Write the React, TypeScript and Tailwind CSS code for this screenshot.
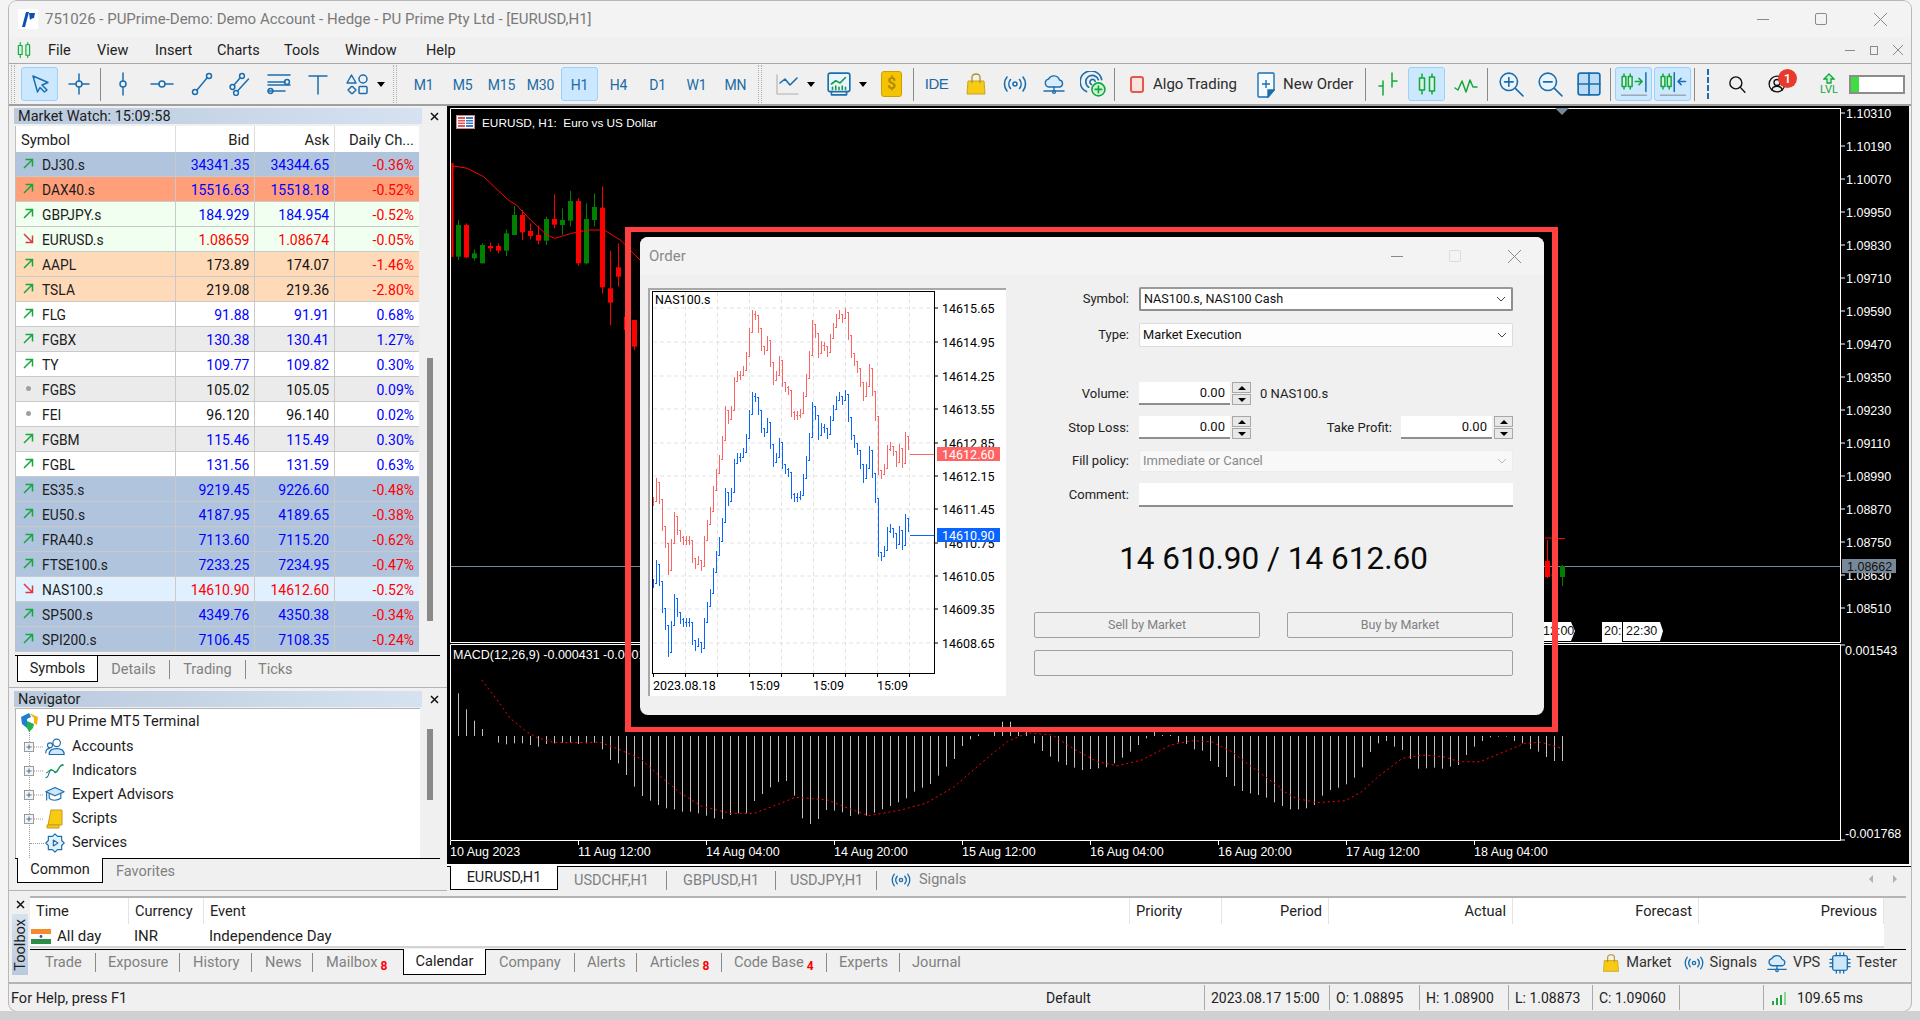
import React from "react"

const BLUE = "#1b6eae"
const GREEN = "#12a83c"

type P = { children: React.ReactNode; size?: number; color?: string; sw?: number }

function Ic({ children, size = 24, color = BLUE, sw = 1.5 }: P) {
  return (
    <svg width={size} height={size} viewBox="0 0 24 24" fill="none" stroke={color} strokeWidth={sw} strokeLinejoin="round" strokeLinecap="round">
      {children}
    </svg>
  )
}

function Slot({ children, on, w = "w-[39px]" }: { children: React.ReactNode; on?: boolean; w?: string }) {
  return (
    <div className={`${w} h-[40px] flex items-center justify-center shrink-0`}>
      <div className={`w-[37px] h-[34px] flex items-center justify-center rounded-[3px] border ${on ? "bg-[#cce8ff] border-[#99d1ff]" : "border-transparent"}`}>
        {children}
      </div>
    </div>
  )
}

const Sep = () => (
  <div className="w-[5px] h-[40px] flex items-center justify-center shrink-0">
    <div className="w-px h-[33px] bg-[#8a8a8a]" />
  </div>
)

const Handle = () => <div className="w-[4px] h-[38px] shrink-0 border-x border-dotted border-[#b0b0b0]" />

const Drop = () => (
  <div className="w-[10px] shrink-0 flex justify-center">
    <div className="w-0 h-0 border-x-[4.5px] border-x-transparent border-t-[5px] border-t-black" />
  </div>
)

function Tf({ t, on }: { t: string; on?: boolean }) {
  return (
    <Slot on={on}>
      <span className="text-[14px] text-[#1b6ba3] tracking-[-0.2px] pt-[2px]">{t}</span>
    </Slot>
  )
}

function Bag({ size = 24 }: { size?: number }) {
  return (
    <svg width={size} height={size} viewBox="0 0 24 24">
      <path d="M4 9h16l1 13H3z" fill="#f7cb14" stroke="#c9a227" strokeWidth="1" />
      <path d="M8 11V5a4 3 0 0 1 8 0v6" fill="none" stroke="#b38f1e" strokeWidth="1.3" />
    </svg>
  )
}

function Signal({ size = 24 }: { size?: number }) {
  return (
    <Ic size={size} sw={1.6}>
      <circle cx="12" cy="12" r="2" />
      <path d="M7.5 7.5a7 7 0 0 0 0 9M16.5 7.5a7 7 0 0 1 0 9M4 5a11 11 0 0 0 0 14M20 5a11 11 0 0 1 0 14" />
    </Ic>
  )
}

function Cloud({ size = 24 }: { size?: number }) {
  return (
    <Ic size={size} sw={1.4}>
      <path d="M7 15a4 4 0 0 1-.5-7.9A6 6 0 0 1 17.5 8 3.6 3.6 0 0 1 18 15z" fill="#d8ecfb" />
      <path d="M2 19h20M12 15v4" />
      <circle cx="12" cy="20" r="1.4" />
    </Ic>
  )
}

function Candles({ size = 24 }: { size?: number }) {
  return (
    <Ic size={size} color={GREEN} sw={1.5}>
      <path d="M7 2v4M7 18v4M17 2v3M17 19v3" />
      <rect x="4.5" y="6" width="5" height="12" fill="#d8f5df" />
      <rect x="14.5" y="5" width="5" height="14" fill="#d8f5df" />
    </Ic>
  )
}

function Toolbar() {
  return (
    <div className="h-[42px] flex items-center border-b-2 border-[#a0a0a0] pl-[1px] shrink-0">
      <div className="w-[1px] shrink-0" />
      <Handle />
      <div className="w-[5px] shrink-0" />
      <Slot on><Ic><path d="M5 4l15 6.5-6 2.5 5 5-2.5 2-4.5-4.5-2.5 4.5z" /></Ic></Slot>
      <Slot><Ic><path d="M12 2v7M12 15v7M2 12h7M15 12h7" /><circle cx="12" cy="12" r="3" /></Ic></Slot>
      <Sep />
      <Slot><Ic><path d="M12 1v8M12 15v8" /><circle cx="12" cy="12" r="3" /></Ic></Slot>
      <Slot><Ic><path d="M1 12h8M15 12h8" /><circle cx="12" cy="12" r="3" /></Ic></Slot>
      <Slot><Ic><path d="M7.8 18.2L18.2 5.8" /><circle cx="6" cy="20" r="2.5" /><circle cx="20" cy="4" r="2.5" /></Ic></Slot>
      <Slot><Ic><path d="M6 13l6-7M9.5 19l11-12" /><circle cx="4.5" cy="15" r="2.4" /><circle cx="14" cy="4" r="2.4" /><circle cx="8" cy="21" r="2.4" /></Ic></Slot>
      <Slot><Ic><path d="M1 3h22M1 10h17M1 19h17M1 13h22" /><circle cx="20" cy="10" r="2.4" /><circle cx="3.5" cy="19" r="2.4" /></Ic></Slot>
      <Slot><Ic><path d="M3 4h18M12 4v18" /></Ic></Slot>
      <Slot><Ic><path d="M6.5 3l4.5 8H2z" /><circle cx="18" cy="7" r="4" /><path d="M3 18l3.5-3.5h1L11 18l-3.5 3.5h-1z" /><rect x="14" y="14.5" width="8" height="7" rx="1" /></Ic></Slot>
      <Drop />
      <div className="w-[7px] shrink-0" />
      <Handle />
      <div className="w-[7px] shrink-0" />
      {["M1", "M5", "M15", "M30"].map(t => <Tf key={t} t={t} />)}
      <Tf t="H1" on />
      {["H4", "D1", "W1", "MN"].map(t => <Tf key={t} t={t} />)}
      <div className="w-[3px] shrink-0" />
      <Handle />
      <div className="w-[5px] shrink-0" />
      <Slot><Ic color="#c4c4c4" sw={1.6}><path d="M2 3v19h21" /><path d="M5 11l5-4 5 6 7-7" stroke={BLUE} /></Ic></Slot>
      <Drop />
      <div className="w-[3px] shrink-0" />
      <Slot>
        <Ic size={26}>
          <rect x="2" y="2" width="20" height="17" rx="2" fill="#e9f4fc" />
          <path d="M5 12l4-3 4 2 5-5" stroke="#1d9a4a" />
          <path d="M6 17v-2M9 17v-3M12 17v-2M15 17v-3M18 17v-2" stroke="#1d9a4a" />
          <path d="M5 19v3h14v-3" />
        </Ic>
      </Slot>
      <Drop />
      <div className="w-[4px] shrink-0" />
      <Slot>
        <div className="w-[21px] h-[26px] rounded-[3px] bg-[#f5c400] border border-[#cda000] flex items-center justify-center text-[16px] text-[#b58900] font-bold">$</div>
      </Slot>
      <Sep />
      <div className="w-[1px] shrink-0" />
      <Slot><span className="text-[15px] text-[#1b6ba3] tracking-[-0.5px] [font-family:'Liberation_Sans',sans-serif]">IDE</span></Slot>
      <Slot><Bag size={24} /></Slot>
      <Slot><Signal /></Slot>
      <Slot><Cloud /></Slot>
      <Slot>
        <Ic size={26}>
          <path d="M6 19A10 10 0 1 1 20 8M8 15a6 6 0 1 1 9-7M10.5 12.5a2.5 2.5 0 1 1 3.5-3" />
          <circle cx="17" cy="17" r="6" fill="#c9f3d2" stroke={GREEN} />
          <path d="M17 14v6M14 17h6" stroke={GREEN} />
        </Ic>
      </Slot>
      <Sep />
      <div className="ml-[13px] w-[14px] h-[17px] rounded-[3px] border-2 border-[#e2584f] bg-[#fde3e0] shrink-0" />
      <span className="ml-[9px] text-[15px] text-[#2c2c2c] w-[88px] shrink-0 whitespace-nowrap">Algo Trading</span>
      <div className="ml-[16px] w-[18px] h-[25px] shrink-0">
        <svg width="18" height="26" viewBox="0 0 18 26" fill="none" stroke={BLUE} strokeWidth="1.4">
          <path d="M2 1h14a1 1 0 0 1 1 1v16l-6 7H2a1 1 0 0 1-1-1V2a1 1 0 0 1 1-1z" fill="#f4fafe" />
          <path d="M9 8v8M5 12h8" />
          <path d="M11 25v-7h6z" fill={BLUE} />
        </svg>
      </div>
      <span className="ml-[8px] text-[15px] text-[#2c2c2c] w-[80px] shrink-0 whitespace-nowrap">New Order</span>
      <Sep />
      <Slot><Ic color={GREEN}><path d="M7 9v14M3 14h4M16 1v14M16 9h5" /></Ic></Slot>
      <Slot on><Candles /></Slot>
      <Slot><Ic color={GREEN}><path d="M1 16l3 2 4-9 4 11 4-12 3 7h4" /></Ic></Slot>
      <Sep />
      <div className="w-[1px] shrink-0" />
      <Slot><Ic size={26}><circle cx="10" cy="10" r="8" fill="#e9f4fc" /><path d="M16 16l7 7M10 6v8M6 10h8" /></Ic></Slot>
      <Slot><Ic size={26}><circle cx="10" cy="10" r="8" fill="#e9f4fc" /><path d="M16 16l7 7M6 10h8" /></Ic></Slot>
      <Slot><Ic size={26} sw={1.6}><rect x="2" y="2" width="20" height="20" rx="2" fill="#bcdcf5" /><path d="M12 2v20M2 12h20" /></Ic></Slot>
      <Sep />
      <div className="w-[1px] shrink-0" />
      <Slot on>
        <Ic size={30} sw={1.2}>
          <g stroke={GREEN}><path d="M4 4v2M4 14v2M9 4v2M9 14v2" /><rect x="2.5" y="6" width="3" height="8" fill="#d8f5df" /><rect x="7.5" y="6" width="3" height="8" fill="#d8f5df" /></g>
          <path d="M13 10h5M16 7.5l2.5 2.5-2.5 2.5" stroke={GREEN} />
          <path d="M21.5 3v15" />
          <path d="M2 21h20" stroke="#9fa8b0" />
        </Ic>
      </Slot>
      <Slot on>
        <Ic size={30} sw={1.2}>
          <g stroke={GREEN}><path d="M4 4v2M4 14v2M9 4v2M9 14v2" /><rect x="2.5" y="6" width="3" height="8" fill="#d8f5df" /><rect x="7.5" y="6" width="3" height="8" fill="#d8f5df" /></g>
          <path d="M13 3v15" />
          <path d="M22 10h-6M18.5 7.5L16 10l2.5 2.5" />
          <path d="M2 21h20" stroke="#9fa8b0" />
        </Ic>
      </Slot>
      <Sep />
      <div className="ml-[10px] w-[3px] h-[30px] border-l-2 border-dashed border-[#1b6eae] shrink-0" />
      <div className="ml-[18px] shrink-0"><Ic size={18} color="#111" sw={1.9}><circle cx="10.5" cy="10.5" r="8" /><path d="M16.5 16.5l6 6.5" /></Ic></div>
      <div className="ml-[22px] relative w-[18px] shrink-0">
        <Ic size={18} color="#111" sw={1.8}><circle cx="12" cy="12" r="10.5" /><circle cx="12" cy="10" r="4" /><path d="M5 20c1-4 4-5 7-5s6 1 7 5" /></Ic>
        <div className="absolute left-[10px] top-[-6px] w-[19px] h-[19px] rounded-full bg-[#e53a2c] text-white text-[13px] font-medium flex items-center justify-center">1</div>
      </div>
      <div className="ml-[33px] w-[20px] shrink-0 flex flex-col items-center">
        <svg width="12" height="11" viewBox="0 0 12 11" fill="#c8f1d2" stroke={GREEN} strokeWidth="1.3"><path d="M6 1l5 5H8v4H4V6H1z" /></svg>
        <span className="text-[11px] leading-[11px] text-[#12a83c]">LVL</span>
      </div>
      <div className="ml-[10px] w-[56px] h-[19px] border-2 border-[#8c8c8c] bg-white shrink-0 flex">
        <div className="w-[8px] bg-[#3fdc42]" />
      </div>
    </div>
  )
}

type Row = { s: string; b: string; a: string; c: string; bg: string; d: "u" | "d" | "n"; col: string }

const SB = "bg-[#b0c4de]"
const W = "bg-white"
const G = "bg-[#ebebeb]"
const U = "text-[#0000ff]"
const R = "text-[#ff0000]"
const K = "text-[#111]"

const rows: Row[] = [
  { s: "DJ30.s", b: "34341.35", a: "34344.65", c: "-0.36%", bg: SB, d: "u", col: U },
  { s: "DAX40.s", b: "15516.63", a: "15518.18", c: "-0.52%", bg: "bg-[#ffa07a]", d: "u", col: U },
  { s: "GBPJPY.s", b: "184.929", a: "184.954", c: "-0.52%", bg: "bg-[#f0fff0]", d: "u", col: U },
  { s: "EURUSD.s", b: "1.08659", a: "1.08674", c: "-0.05%", bg: "bg-[#f0fff0]", d: "d", col: R },
  { s: "AAPL", b: "173.89", a: "174.07", c: "-1.46%", bg: "bg-[#ffdab9]", d: "u", col: K },
  { s: "TSLA", b: "219.08", a: "219.36", c: "-2.80%", bg: "bg-[#ffdab9]", d: "u", col: K },
  { s: "FLG", b: "91.88", a: "91.91", c: "0.68%", bg: W, d: "u", col: U },
  { s: "FGBX", b: "130.38", a: "130.41", c: "1.27%", bg: G, d: "u", col: U },
  { s: "TY", b: "109.77", a: "109.82", c: "0.30%", bg: W, d: "u", col: U },
  { s: "FGBS", b: "105.02", a: "105.05", c: "0.09%", bg: G, d: "n", col: K },
  { s: "FEI", b: "96.120", a: "96.140", c: "0.02%", bg: W, d: "n", col: K },
  { s: "FGBM", b: "115.46", a: "115.49", c: "0.30%", bg: G, d: "u", col: U },
  { s: "FGBL", b: "131.56", a: "131.59", c: "0.63%", bg: W, d: "u", col: U },
  { s: "ES35.s", b: "9219.45", a: "9226.60", c: "-0.48%", bg: SB, d: "u", col: U },
  { s: "EU50.s", b: "4187.95", a: "4189.65", c: "-0.38%", bg: SB, d: "u", col: U },
  { s: "FRA40.s", b: "7113.60", a: "7115.20", c: "-0.62%", bg: SB, d: "u", col: U },
  { s: "FTSE100.s", b: "7233.25", a: "7234.95", c: "-0.47%", bg: SB, d: "u", col: U },
  { s: "NAS100.s", b: "14610.90", a: "14612.60", c: "-0.52%", bg: "bg-[#e0f0fe]", d: "d", col: R },
  { s: "SP500.s", b: "4349.76", a: "4350.38", c: "-0.34%", bg: SB, d: "u", col: U },
  { s: "SPI200.s", b: "7106.45", a: "7108.35", c: "-0.24%", bg: SB, d: "u", col: U },
]

function Dir({ d }: { d: Row["d"] }) {
  if (d === "n") return <div className="w-[5px] h-[5px] rounded-full bg-[#a0a0a0] mx-[3px] -mt-[3px]" />
  return (
    <svg width="11" height="11" viewBox="0 0 11 11" fill="none" strokeWidth="1.5" stroke={d === "u" ? "#12a83c" : "#e0383e"} className="-mt-[3px]">
      {d === "u" ? <path d="M1 10L9.5 1.5M2.5 1.5h7v7" /> : <path d="M1 1l8.5 8.5M2.5 9.5h7v-7" />}
    </svg>
  )
}

function PanelTitle({ t }: { t: string }) {
  return (
    <div className="flex items-center h-[16px] pl-[5px] shrink-0">
      <div className="w-[408px] h-[16px] bg-gradient-to-r from-[#b9cadd] to-[#d6e2f0] pl-[4px] text-[14.5px] leading-[18px] text-[#1c1c1c]">{t}</div>
      <svg width="9" height="9" viewBox="0 0 9 9" stroke="#111" strokeWidth="1.5" className="ml-[8px]"><path d="M1 1l7 7M8 1L1 8" /></svg>
    </div>
  )
}

function MarketWatch() {
  return (
    <div className="h-[581px] flex flex-col pt-[2px] shrink-0">
      <PanelTitle t="Market Watch: 15:09:58" />
      <div className="flex ml-[6px] mt-[2px]">
        <div className="w-[404px] border-l border-[#c0c0c0]">
          <div className="flex h-[26px] bg-white text-[14.8px] text-[#222] items-center">
            <div className="w-[160px] pl-[5px] pt-[2px] border-r border-[#ddd] h-full flex items-center">Symbol</div>
            <div className="w-[80px] pr-[5px] pt-[2px] text-right border-r border-[#ddd] h-full flex items-center justify-end">Bid</div>
            <div className="w-[80px] pr-[5px] pt-[2px] text-right border-r border-[#ddd] h-full flex items-center justify-end">Ask</div>
            <div className="w-[84px] pr-[5px] pt-[2px] text-right h-full flex items-center justify-end">Daily Ch...</div>
          </div>
          {rows.map(r => (
            <div key={r.s} className={`flex h-[25px] text-[14px] items-center border-b border-[#c9c9c9] ${r.bg}`}>
              <div className="w-[160px] pl-[7px] pt-[2px] h-full border-r border-[#c9c9c9] flex items-center text-[#1c1c1c]">
                <Dir d={r.d} />
                <span className="ml-[8px] text-[13.8px]">{r.s}</span>
              </div>
              <div className={`w-[80px] pr-[5px] pt-[2px] h-full border-r border-[#c9c9c9] flex items-center justify-end ${r.col}`}>{r.b}</div>
              <div className={`w-[80px] pr-[5px] pt-[2px] h-full border-r border-[#c9c9c9] flex items-center justify-end ${r.col}`}>{r.a}</div>
              <div className={`w-[84px] pr-[5px] pt-[2px] h-full flex items-center justify-end ${r.c.startsWith("-") ? R : U}`}>{r.c}</div>
            </div>
          ))}
        </div>
        <div className="ml-[8px] w-[6px] mt-[232px] h-[263px] bg-[#8a8a8a]" />
      </div>
      <div className="relative ml-[6px] mr-[7px] mt-[3px] h-[28px] border-t border-black flex items-center text-[14.5px] text-[#808080]">
        <div className="ml-[2px] w-[81px] h-[26px] -mt-[1px] bg-white border-x border-b border-black text-[#1c1c1c] flex items-center justify-center">Symbols</div>
        <div className="w-[72px] text-center h-[19px] leading-[19px] border-r border-[#8a8a8a]">Details</div>
        <div className="w-[76px] text-center h-[19px] leading-[19px] border-r border-[#8a8a8a]">Trading</div>
        <div className="ml-[12px]">Ticks</div>
      </div>
    </div>
  )
}

function Plus() {
  return (
    <svg width="21" height="14" viewBox="0 0 21 14" className="shrink-0">
      <rect x="0.5" y="2.5" width="9" height="9" fill="#f4f4f4" stroke="#9a9a9a" />
      <path d="M2.5 7h5M5 4.5v5" stroke="#3a6ea5" />
      <path d="M10 7h9" stroke="#9a9a9a" strokeDasharray="1 1" />
    </svg>
  )
}

function Navigator() {
  const items: [string, React.ReactNode, boolean][] = [
    ["Accounts", <Ic size={20} sw={1.4} key="a"><circle cx="14" cy="7" r="4.5" /><path d="M5 21c0-5 3-7 9-7s9 2 9 7z" fill="#cfe7fa" /><circle cx="6" cy="10" r="3" /><path d="M1 19c0-3 1-5 4-5" /></Ic>, true],
    ["Indicators", <Ic size={20} color={BLUE} sw={1.3} key="i"><path d="M1 20c4 0 3-9 7-9s3 5 6 2 3-8 8-9" strokeDasharray="3 1" /><path d="M2 14c4-2 4-5 7-3s4 3 6 0 3-5 7-6" stroke={GREEN} strokeDasharray="2 1" /></Ic>, true],
    ["Expert Advisors", <Ic size={20} sw={1.4} key="e"><path d="M12 3L1 8l11 5 11-5z" fill="#cfe7fa" /><path d="M5 10v6c3 3 10 3 14 0v-6M2 9v9" /></Ic>, true],
    ["Scripts", <svg width="20" height="20" viewBox="0 0 20 20" key="s"><path d="M6 1h11v15H3z" fill="#f7cb14" stroke="#c79a18" /><path d="M2 16h12v3H2z" fill="#f7cb14" stroke="#c79a18" /></svg>, true],
    ["Services", <Ic size={20} sw={1.4} key="v"><path d="M12 1l3 3h5v5l3 3-3 3v5h-5l-3 3-3-3H4v-5l-3-3 3-3V4h5z" fill="#e4f1fb" /><path d="M10 8.5l5.5 3.5-5.5 3.5z" /></Ic>, false],
  ]
  return (
    <div className="flex-1 flex flex-col border-t border-[#b4b4b4] pt-[3px]">
      <PanelTitle t="Navigator" />
      <div className="flex ml-[6px] mt-[1px] h-[150px]">
        <div className="w-[405px] bg-white border-t border-l border-[#b4b4b4] relative overflow-hidden text-[14.6px]">
          <div className="absolute left-[13px] top-[22px] bottom-0 border-l border-dotted border-[#9a9a9a]" />
          <div className="relative flex items-center h-[26px] pl-[4px] text-[#1c1c1c]">
            <svg width="19" height="20" viewBox="0 0 19 20">
              <path d="M1 5l8-4 2 4-4 2v9l-5-4z" fill="#1f7fd0" />
              <path d="M9 1l9 4-1 8-3-2V6z" fill="#f0b40e" />
              <path d="M7 9l7 3-1 4-4 4-2-4z" fill="#22b14c" />
            </svg>
            <span className="ml-[7px]">PU Prime MT5 Terminal</span>
          </div>
          {items.map(([t, ic, plus]) => (
            <div key={t} className="relative flex items-center h-[24px] pl-[8px] text-[#1c1c1c]">
              {plus ? <Plus /> : <div className="w-[21px] h-px shrink-0 pl-[5px]"><div className="h-px ml-[1px] w-[14px] border-t border-dotted border-[#9a9a9a]" /></div>}
              <div className="w-[20px] shrink-0 flex justify-center">{ic}</div>
              <span className="ml-[7px]">{t}</span>
            </div>
          ))}
        </div>
        <div className="ml-[7px] mt-[21px] w-[6px] h-[71px] bg-[#8a8a8a]" />
      </div>
      <div className="ml-[6px] mr-[7px] h-[28px] border-t border-black flex text-[14.5px] text-[#808080]">
        <div className="ml-[2px] w-[86px] h-[25px] -mt-[1px] bg-white border-x border-b border-black text-[#1c1c1c] flex items-center justify-center">Common</div>
        <div className="ml-[13px] h-[25px] flex items-center">Favorites</div>
      </div>
    </div>
  )
}

const CANDLES: [number, number, number, number, number, number][] = [
  [458, 660, 780, 675, 770, 0], [466, 670, 775, 675, 772, 1], [474, 748, 782, 760, 775, 0], [482, 730, 790, 735, 790, 0],
  [490, 728, 755, 738, 745, 1], [498, 730, 760, 738, 752, 1], [506, 688, 768, 700, 752, 0], [514, 618, 705, 645, 705, 0],
  [522, 630, 720, 645, 697, 1], [530, 670, 718, 693, 708, 1], [538, 677, 733, 705, 722, 1], [546, 650, 735, 657, 722, 0],
  [554, 583, 685, 657, 674, 1], [562, 625, 705, 660, 675, 0], [570, 573, 680, 603, 662, 0], [578, 595, 797, 603, 790, 1],
  [586, 610, 793, 657, 790, 0], [594, 580, 680, 621, 660, 0], [602, 560, 880, 623, 862, 1], [610, 753, 975, 865, 908, 1],
  [618, 730, 860, 802, 830, 1], [626, 900, 1000, 950, 990, 1], [634, 960, 1050, 960, 1040, 1],
]

const MACD_LEFT = [40, 88, 122, 147, 168, 188, 193, 190, 190, 195, 200, 192, 190, 188, 188, 192, 190, 188, 208, 240, 250, 285, 320]
const MACD_MID = [
  348, 362, 375, 385, 388, 395, 395, 400, 407, 415, 417, 405, 400, 400, 363, 342, 322, 306, 303, 347,
  415, 432, 417, 390, 392, 397, 408, 403, 407, 398, 388, 378, 367, 355, 335, 323, 312, 287, 260, 237,
  198, 178, 163, 168, 150, 125, 125, 150, 155, 190, 213, 230, 245, 255, 263, 270, 267, 265, 262, 250,
  233, 215, 195, 175, 155, 165, 165, 187, 192, 208, 212, 243, 261, 291, 318, 333, 340, 345, 353, 367,
  378, 388, 388, 385, 375, 347, 330, 323, 313, 293, 262, 216, 190, 183, 200, 210, 237, 266, 265, 263,
  266, 260, 255, 225, 200, 183, 172, 170, 170, 183, 190, 207, 215, 231, 243, 243,
]

const SIG_LEFT: [number, number][] = [[1180, 0], [1215, 55], [1250, 115], [1290, 155], [1320, 175], [1360, 188], [1470, 187], [1510, 205], [1568, 235]]
const SIG_MID: [number, number][] = [[0, 235], [45, 285], [100, 340], [150, 378], [220, 400], [280, 400], [340, 372], [380, 352], [460, 360], [500, 380], [560, 407], [640, 390], [700, 370], [770, 320], [850, 235], [900, 185], [950, 158], [1010, 165], [1060, 205], [1120, 245], [1170, 257], [1230, 240], [1300, 195], [1350, 182], [1400, 185], [1450, 215], [1500, 262], [1568, 322]]
const SIG_RIGHT: [number, number][] = [[0, 328], [40, 355], [90, 368], [160, 362], [200, 335], [240, 290], [300, 235], [350, 225], [400, 230], [440, 245], [490, 245], [550, 215], [600, 190], [640, 187], [690, 205]]

const signal = [
  ...SIG_LEFT.map(([x, y]) => `${(x / 2.45).toFixed(1)},${(680 + y / 3).toFixed(1)}`),
  ...SIG_MID.map(([x, y]) => `${(640 + x / 2.45).toFixed(1)},${(680 + y / 3).toFixed(1)}`),
  ...SIG_RIGHT.map(([x, y]) => `${(1280 + x / 2.45).toFixed(1)},${(680 + y / 3).toFixed(1)}`),
].join(" ")

const MA: [number, number][] = [[1107, 497], [1145, 505], [1185, 530], [1245, 600], [1265, 615], [1300, 660], [1340, 705], [1360, 715], [1400, 700], [1440, 690], [1480, 690], [1520, 720], [1568, 780]]

const PRICES = ["1.10310", "1.10190", "1.10070", "1.09950", "1.09830", "1.09710", "1.09590", "1.09470", "1.09350", "1.09230", "1.09110", "1.08990", "1.08870", "1.08750", "1.08630", "1.08510"]
const TIMES = ["10 Aug 2023", "11 Aug 12:00", "14 Aug 04:00", "14 Aug 20:00", "15 Aug 12:00", "16 Aug 04:00", "16 Aug 20:00", "17 Aug 12:00", "18 Aug 04:00"]

function Chart() {
  return (
    <svg width="1462" height="758" viewBox="447 106 1462 758" className="block bg-black shrink-0 [font-family:'Liberation_Sans',sans-serif] text-[12.5px]">
      <path d="M450.5 108.5H1840.5V642.5H450.5z" fill="none" stroke="#fff" />
      <path d="M450.5 644.5H1840.5V840.5H450.5z" fill="none" stroke="#fff" />
      <path d="M1555 108h14l-7 7z" fill="#778899" />
      <line x1="451" y1="566.5" x2="1840" y2="566.5" stroke="#778899" />
      <line x1="452.5" y1="163" x2="452.5" y2="257" stroke="#ff0000" strokeWidth="2" />
      {CANDLES.map(([x, h, l, t, b, red]) => {
        const c = red ? "#ff0000" : "#008000"
        return (
          <g key={x}>
            <line x1={x + 0.5} x2={x + 0.5} y1={h / 3} y2={l / 3} stroke={c} />
            <rect x={x - 2} y={t / 3} width="5" height={(b - t) / 3} fill={c} />
          </g>
        )
      })}
      <line x1="1547.5" x2="1547.5" y1="540" y2="578" stroke="#ff0000" />
      <rect x="1545" y="561" width="5" height="16" fill="#ff0000" />
      <line x1="1562.5" x2="1562.5" y1="565" y2="586" stroke="#008000" />
      <rect x="1560" y="566" width="5" height="11" fill="#008000" />
      <path d="M1545 538h8M1558 538.5h7M1551 575h4" stroke="#ff0000" />
      <polyline fill="none" stroke="#ff0000" points={MA.map(([x, y]) => `${(x / 2.45).toFixed(1)},${(y / 3).toFixed(1)}`).join(" ")} />

      {PRICES.map((p, i) => (
        <g key={p}>
          <line x1="1840" x2="1845" y1={113 + i * 33} y2={113 + i * 33} stroke="#fff" />
          <text x="1846" y={118 + i * 33} fill="#fff">{p}</text>
        </g>
      ))}
      <rect x="1842" y="559" width="54" height="14" fill="#778899" />
      <text x="1847" y="571" fill="#111">1.08662</text>

      <text x="482" y="127" fill="#fff" className="text-[11.8px]">{"EURUSD, H1:\u00a0\u00a0Euro vs US Dollar"}</text>
      <g>
        <rect x="456.5" y="115.5" width="18" height="13" fill="#fff" stroke="#c88" />
        <rect x="458" y="117" width="7" height="10" fill="#e25555" />
        <path d="M458 119.5h7M458 122h7M458 124.5h7" stroke="#fff" />
        <rect x="466" y="117" width="7" height="10" fill="#3f78c8" />
        <path d="M466 119.5h7M466 122h7M466 124.5h7" stroke="#fff" />
      </g>

      <path d="M1540 622h31l4 9-4 10h-31z" fill="#fff" />
      <text x="1543" y="635" fill="#111">12:00</text>
      <rect x="1602" y="622" width="20" height="20" fill="#fff" />
      <text x="1604" y="635" fill="#111">20:</text>
      <path d="M1623 622h37l3 9-3 10h-37z" fill="#fff" />
      <text x="1626" y="635" fill="#111">22:30</text>

      <text x="453" y="659" fill="#fff">MACD(12,26,9) -0.000431 -0.000173</text>
      <line x1="1840" x2="1845" y1="645" y2="645" stroke="#fff" />
      <text x="1845" y="655" fill="#fff">0.001543</text>
      <line x1="1840" x2="1845" y1="840" y2="840" stroke="#fff" />
      <text x="1845" y="838" fill="#fff">-0.001768</text>

      {MACD_LEFT.map((z, i) => (
        <line key={i} x1={458.5 + i * 8} x2={458.5 + i * 8} y1="736" y2={680 + z / 3} stroke="#c0c0c0" />
      ))}
      {MACD_MID.map((z, i) => (
        <line key={i} x1={642.5 + i * 8} x2={642.5 + i * 8} y1="736" y2={680 + z / 3} stroke="#c0c0c0" />
      ))}
      <polyline points={signal} fill="none" stroke="#ff0000" strokeDasharray="2 3" />

      {TIMES.map((t, i) => (
        <g key={t}>
          <line x1={450.5 + i * 128} x2={450.5 + i * 128} y1="841" y2="845" stroke="#fff" />
          <text x={450 + i * 128} y="856" fill="#fff">{t}</text>
        </g>
      ))}
    </svg>
  )
}

const SERIES: [number, number][] = [[15, 635], [20, 570], [30, 590], [38, 690], [48, 735], [60, 840], [68, 770], [78, 680], [90, 735], [105, 750], [125, 750], [135, 830], [150, 810], [160, 830], [170, 730], [185, 670], [195, 600], [205, 545], [215, 500], [225, 430], [232, 350], [245, 410], [255, 290], [262, 255], [280, 255], [290, 225], [300, 160], [308, 70], [325, 80], [335, 150], [345, 200], [355, 135], [365, 210], [375, 270], [385, 255], [393, 210], [405, 300], [418, 285], [430, 375], [455, 375], [465, 320], [475, 260], [485, 180], [495, 70], [505, 170], [512, 200], [522, 150], [535, 195], [545, 150], [557, 105], [570, 70], [585, 90], [592, 65], [605, 180], [620, 220], [630, 240], [640, 300], [650, 340], [660, 210], [670, 290], [680, 360], [690, 540], [705, 560], [715, 480], [730, 465], [745, 520], [752, 470], [762, 520], [772, 430], [785, 490]]

function hatch(dz: number) {
  let d = ""
  const at = (z: number) => {
    for (let i = 1; i < SERIES.length; i++) {
      const [a, b] = SERIES[i - 1]
      const [c, e] = SERIES[i]
      if (z <= c) return b + ((e - b) * (z - a)) / (c - a)
    }
    return SERIES[SERIES.length - 1][1]
  }
  let prev = 0
  for (let z = 15; z <= 785; z += 9) {
    const x = Math.round(648 + z / 3) + 0.5
    const y = 290 + (at(z) + dz) / 3
    d += prev ? `M${x - 1.5} ${prev.toFixed(1)}H${x}V${y.toFixed(1)}` : ""
    d += `M${x} ${(y - 4.5).toFixed(1)}V${(y + 4.5).toFixed(1)}`
    prev = y
  }
  return d
}

function MiniChart() {
  const labels: [string, number][] = [["14615.65", 308], ["14614.95", 342], ["14614.25", 376], ["14613.55", 409], ["14612.85", 443], ["14612.15", 476], ["14611.45", 509], ["14610.75", 543], ["14610.05", 576], ["14609.35", 609], ["14608.65", 643]]
  const vs = [685, 717, 749, 781, 813, 845, 877, 909]
  return (
    <svg width="358" height="408" viewBox="648 288 358 408" className="block shrink-0 bg-white text-[12.5px] [font-family:Roboto,sans-serif]">
      <path d="M649 696V289H1006" fill="none" stroke="#a8a8a8" strokeWidth="2" />
      {labels.map(([, y]) => <line key={y} x1="653" x2="935" y1={y} y2={y} stroke="#e3e3e3" strokeDasharray="4 3" />)}
      {vs.map(x => <line key={x} x1={x + 0.5} x2={x + 0.5} y1="292" y2="673" stroke="#e3e3e3" strokeDasharray="4 3" />)}
      <path d={hatch(0)} stroke="#ff6464" fill="none" shapeRendering="crispEdges" />
      <path d={hatch(246)} stroke="#0a64ff" fill="none" shapeRendering="crispEdges" />
      <path d="M910 454.5H935" stroke="#ff6464" />
      <path d="M910 535.5H935" stroke="#0a64ff" />
      <rect x="652.5" y="291.5" width="282" height="382" fill="none" stroke="#000" />
      <text x="655" y="304" fill="#000">NAS100.s</text>
      {labels.map(([t, y]) => (
        <g key={t}>
          <line x1="935" x2="938" y1={y} y2={y} stroke="#000" />
          <text x="942" y={y + 5} fill="#000">{t}</text>
        </g>
      ))}
      {[653, ...vs].map(x => <line key={x} x1={x + 0.5} x2={x + 0.5} y1="673" y2="677" stroke="#000" />)}
      <rect x="937" y="447" width="63" height="14" fill="#ff6464" />
      <text x="942" y="459" fill="#fff">14612.60</text>
      <rect x="937" y="528" width="63" height="14" fill="#0a64ff" />
      <text x="942" y="540" fill="#fff">14610.90</text>
      <text x="653" y="690" fill="#000">2023.08.18</text>
      <text x="749" y="690" fill="#000">15:09</text>
      <text x="813" y="690" fill="#000">15:09</text>
      <text x="877" y="690" fill="#000">15:09</text>
    </svg>
  )
}

const Chev = ({ light }: { light?: boolean }) => (
  <svg width="10" height="7" viewBox="0 0 10 7" fill="none" stroke={light ? "#b8b8b8" : "#444"} className="mr-[5px] shrink-0"><path d="M1 1l4 4 4-4" /></svg>
)

function Spin() {
  return (
    <div className="ml-[2px] w-[19px] h-[23px] flex flex-col gap-px shrink-0">
      <div className="flex-1 bg-[#e8e8e8] border border-[#a8a8a8] flex items-center justify-center">
        <div className="w-0 h-0 border-x-[4px] border-x-transparent border-b-[4px] border-b-black" />
      </div>
      <div className="flex-1 bg-[#e8e8e8] border border-[#a8a8a8] flex items-center justify-center">
        <div className="w-0 h-0 border-x-[4px] border-x-transparent border-t-[4px] border-t-black" />
      </div>
    </div>
  )
}

function Num() {
  return <div className="w-[91px] h-[23px] bg-white border-b-2 border-[#8e8e8e] text-right pr-[5px] text-[13px] leading-[22px] text-[#111] shrink-0">0.00</div>
}

const Lab = ({ t }: { t: string }) => <div className="w-[95px] mr-[10px] text-right shrink-0 text-[#222]">{t}</div>

function OrderDialog() {
  return (
    <div className="absolute left-[625px] top-[227px] w-[933px] h-[505px] border-x-[6px] border-y-[5px] border-[#ff4040] pl-[9px] pt-[5px]">
      <div className="w-[904px] h-[478px] rounded-[8px] bg-[#f0f0f0] text-[13px] flex flex-col overflow-hidden">
        <div className="h-[38px] bg-[#f3f3f3] flex items-center pl-[9px] text-[15px] text-[#8a8a8a] shrink-0">
          <span>Order</span>
          <div className="ml-auto mr-[23px] flex items-center">
            <div className="w-[12px] h-px bg-[#8a8a8a]" />
            <div className="ml-[46px] w-[12px] h-[12px] border border-[#dcdcdc] rounded-[1px]" />
            <svg width="13" height="13" viewBox="0 0 13 13" stroke="#8a8a8a" className="ml-[47px]"><path d="M0 0l13 13M13 0L0 13" /></svg>
          </div>
        </div>
        <div className="flex pl-[8px] pt-[13px]">
          <MiniChart />
          <div className="ml-[28px] w-[479px] -mt-[1px] flex flex-col">
            <div className="flex items-center h-[24px]">
              <Lab t="Symbol:" />
              <div className="flex-1 h-[24px] bg-white border-2 border-[#8e8e8e] border-t-[#9a9a9a] rounded-[2px] flex items-center justify-between pl-[3px] text-[#111] text-[12.6px]">NAS100.s, NAS100 Cash<Chev /></div>
            </div>
            <div className="flex items-center h-[24px] mt-[12px]">
              <Lab t="Type:" />
              <div className="flex-1 h-[24px] bg-[#fdfdfd] border border-[#dcdcdc] rounded-[2px] flex items-center justify-between pl-[3px] text-[#111] text-[12.8px]">Market Execution<Chev /></div>
            </div>
            <div className="flex items-center h-[23px] mt-[35px]">
              <Lab t="Volume:" />
              <Num />
              <Spin />
              <span className="ml-[9px] text-[#222]">0 NAS100.s</span>
            </div>
            <div className="flex items-center h-[23px] mt-[11px]">
              <Lab t="Stop Loss:" />
              <Num />
              <Spin />
              <div className="w-[141px] mr-[9px] text-right ml-0 text-[#222] shrink-0">Take Profit:</div>
              <Num />
              <Spin />
            </div>
            <div className="flex items-center h-[22px] mt-[11px]">
              <Lab t="Fill policy:" />
              <div className="flex-1 h-[22px] bg-[#f8f8f8] border border-[#ececec] rounded-[2px] flex items-center justify-between pl-[3px] text-[#8a8a8a]">Immediate or Cancel<Chev light /></div>
            </div>
            <div className="flex items-center h-[24px] mt-[11px]">
              <Lab t="Comment:" />
              <div className="flex-1 h-[24px] bg-white border-b-2 border-[#8e8e8e]" />
            </div>
            <div className="h-[40px] mt-[32px] text-center text-[31.5px] leading-[40px] text-[#0a0a0a]">14 610.90 / 14 612.60</div>
            <div className="flex justify-between mt-[33px] text-[#808080] text-[12.5px]">
              <div className="w-[226px] h-[26px] border border-[#a0a0a0] rounded-[2px] flex items-center justify-center">Sell by Market</div>
              <div className="w-[226px] h-[26px] border border-[#a0a0a0] rounded-[2px] flex items-center justify-center">Buy by Market</div>
            </div>
            <div className="w-[479px] h-[26px] mt-[12px] border border-[#a0a0a0] rounded-[2px]" />
          </div>
        </div>
      </div>
    </div>
  )
}

function ChartTabs() {
  return (
    <div className="flex-1 border-t border-black bg-[#f0f0f0] flex items-start text-[14.5px] text-[#808080] relative">
      <div className="ml-[3px] w-[108px] h-[24px] -mt-[1px] pt-[1px] bg-white border-x border-b border-black text-[#1c1c1c] flex items-center justify-center">EURUSD,H1</div>
      <div className="w-[109px] h-[19px] mt-[4px] border-r border-[#8a8a8a] pl-[16px] leading-[19px]">USDCHF,H1</div>
      <div className="w-[109px] h-[19px] mt-[4px] border-r border-[#8a8a8a] pl-[16px] leading-[19px]">GBPUSD,H1</div>
      <div className="w-[101px] h-[19px] mt-[4px] border-r border-[#8a8a8a] pl-[14px] leading-[19px]">USDJPY,H1</div>
      <div className="ml-[14px] mt-[2px] h-[22px] flex items-center">
        <Signal size={20} />
        <span className="ml-[8px]">Signals</span>
      </div>
      <div className="ml-auto mr-[14px] mt-[8px] flex gap-[20px]">
        <div className="w-0 h-0 border-y-[4px] border-y-transparent border-r-[4px] border-r-[#b0b0b0]" />
        <div className="w-0 h-0 border-y-[4px] border-y-transparent border-l-[4px] border-l-[#b0b0b0]" />
      </div>
    </div>
  )
}

const HCell = ({ t, w, right }: { t: string; w: string; right?: boolean }) => (
  <div className={`${w} h-[26px] leading-[26px] border-r border-[#e4e4e4] shrink-0 px-[6px] ${right ? "text-right" : ""}`}>{t}</div>
)

function TTab({ t, w, n, pl = "pl-[13px]" }: { t: string; w: string; n?: string; pl?: string }) {
  return (
    <div className={`${w} ${pl} h-[19px] mt-[3px] border-r border-[#8a8a8a] leading-[19px] flex shrink-0`}>
      {t}
      {n && <span className="ml-[3px] mt-[4px] text-[#ff0000] font-bold text-[12px]">{n}</span>}
    </div>
  )
}

function Toolbox() {
  return (
    <div className="h-[92px] flex shrink-0 border-t border-[#b4b4b4] text-[14.6px]">
      <div className="w-[21px] shrink-0 flex flex-col items-center pt-[9px] pl-[1px]">
        <svg width="9" height="9" viewBox="0 0 9 9" stroke="#111" strokeWidth="1.5"><path d="M1 1l7 7M8 1L1 8" /></svg>
        <div className="mt-[5px] w-[16px] h-[61px] bg-gradient-to-t from-[#b9cadd] to-[#d6e2f0] flex items-center justify-center">
          <span className="[writing-mode:vertical-rl] rotate-180 leading-[16px] text-[#1c1c1c] whitespace-nowrap">Toolbox</span>
        </div>
      </div>
      <div className="flex-1 pt-[5px] pr-[5px]">
        <div className="border-t-2 border-[#b4b4b4] flex h-[52px]">
          <div className="w-[1854px] bg-white border-b-2 border-[#d4d4d4] text-[#222] shrink-0">
            <div className="flex">
              <HCell t="Time" w="w-[99px]" />
              <HCell t="Currency" w="w-[75px]" />
              <HCell t="Event" w="w-[926px]" />
              <HCell t="Priority" w="w-[92px]" />
              <HCell t="Period" w="w-[107px]" right />
              <HCell t="Actual" w="w-[184px]" right />
              <HCell t="Forecast" w="w-[186px]" right />
              <HCell t="Previous" w="w-[185px]" right />
            </div>
            <div className="flex h-[24px] items-center text-[15px]">
              <svg width="20" height="15" viewBox="0 0 20 15" className="ml-[1px] shrink-0">
                <rect width="20" height="5" fill="#f58b2c" />
                <rect y="5" width="20" height="5" fill="#fff" />
                <rect y="10" width="20" height="5" fill="#2a8f45" />
                <circle cx="10" cy="7.5" r="1.4" fill="#3a4ea5" />
              </svg>
              <span className="ml-[6px] w-[77px]">All day</span>
              <span className="w-[75px]">INR</span>
              <span>Independence Day</span>
            </div>
          </div>
          <div className="flex-1" />
        </div>
        <div className="h-[26px] mt-[1px] border-t border-black flex text-[#808080] relative">
          <TTab t="Trade" w="w-[66px]" pl="pl-[15px]" />
          <TTab t="Exposure" w="w-[84px]" pl="pl-[12px]" />
          <TTab t="History" w="w-[72px]" />
          <TTab t="News" w="w-[61px]" />
          <div className="w-[90px] h-[19px] mt-[3px] pl-[13px] leading-[19px] flex shrink-0">
            Mailbox<span className="ml-[3px] mt-[4px] text-[#ff0000] font-bold text-[12px]">8</span>
          </div>
          <div className="w-[83px] h-[26px] -mt-px bg-white border-x border-b border-black text-[#1c1c1c] flex items-center justify-center shrink-0">Calendar</div>
          <TTab t="Company" w="w-[89px]" />
          <TTab t="Alerts" w="w-[62px]" pl="pl-[12px]" />
          <TTab t="Articles" w="w-[85px]" n="8" />
          <TTab t="Code Base" w="w-[105px]" pl="pl-[12px]" n="4" />
          <TTab t="Experts" w="w-[73px]" pl="pl-[12px]" />
          <div className="pl-[12px] h-[19px] mt-[3px] leading-[19px]">Journal</div>
          <div className="ml-auto mr-[9px] h-[25px] flex items-center text-[#333]">
            <Bag size={20} />
            <span className="ml-[5px]">Market</span>
            <div className="ml-[12px]"><Signal size={20} /></div>
            <span className="ml-[6px]">Signals</span>
            <div className="ml-[9px]"><Cloud size={22} /></div>
            <span className="ml-[5px]">VPS</span>
            <div className="ml-[9px]">
              <Ic size={22} sw={1.4}>
                <rect x="4" y="4" width="16" height="16" rx="2" fill="#cfe7fa" />
                <path d="M8 1v3M12 1v3M16 1v3M8 20v3M12 20v3M16 20v3M1 8h3M1 12h3M1 16h3M20 8h3M20 12h3M20 16h3" />
              </Ic>
            </div>
            <span className="ml-[5px]">Tester</span>
          </div>
        </div>
      </div>
    </div>
  )
}

const Cell = ({ t, w }: { t?: string; w: string }) => (
  <div className={`${w} h-[25px] leading-[27px] border-r border-[#a8a8a8] pl-[6px] shrink-0 whitespace-nowrap`}>{t}</div>
)

function StatusBar() {
  return (
    <div className="h-[29px] border-t-2 border-[#b4b4b4] flex items-center text-[14px] text-[#222] shrink-0">
      <div className="w-[1031px] pl-[2px] pt-[2px] shrink-0 text-[14.5px]">For Help, press F1</div>
      <Cell t="Default" w="w-[165px]" />
      <Cell t="2023.08.17 15:00" w="w-[125px]" />
      <Cell t="O: 1.08895" w="w-[90px]" />
      <Cell t="H: 1.08900" w="w-[89px]" />
      <Cell t="L: 1.08873" w="w-[84px]" />
      <Cell t="C: 1.09060" w="w-[87px]" />
      <Cell w="w-[84px]" />
      <svg width="14" height="14" viewBox="0 0 14 14" fill="#22a83e" className="ml-[8px] shrink-0">
        <rect x="0" y="10" width="2" height="4" /><rect x="4" y="7" width="2" height="7" /><rect x="8" y="4" width="2" height="10" /><rect x="12" y="1" width="2" height="13" fill="#8fd49e" />
      </svg>
      <span className="ml-[11px] pt-[2px]">109.65 ms</span>
    </div>
  )
}

export default function App() {
  return (
    <div className="relative w-[1920px] h-[1020px] overflow-hidden flex flex-col bg-[#f4f4f4] [font-family:Roboto,sans-serif]">
      <div className="flex-1 flex pt-[1px] min-h-0">
        <div className="w-[9px] shrink-0" />
        <div className="w-[1902px] h-[1010px] bg-[#f0f0f0] rounded-[8px] flex flex-col overflow-hidden shadow-[0_0_0_1px_#b8b8b8]">
          <div className="h-[36px] bg-[#f3f3f3] flex items-center text-[15px] text-[#7a7a7a] shrink-0">
            <svg width="20" height="20" viewBox="0 0 20 20" className="ml-[9px] shrink-0">
              <rect width="20" height="20" fill="#fff" />
              <path d="M4 18L8 3h3L7 18z" fill="#0f4fb0" />
              <path d="M11 4h6l-1 5c-2 0-3 1-4 2z" fill="#0f4fb0" />
            </svg>
            <span className="ml-[7px]">751026 - PUPrime-Demo: Demo Account - Hedge - PU Prime Pty Ltd - [EURUSD,H1]</span>
            <div className="ml-auto mr-[24px] flex items-center">
              <div className="w-[12px] h-px bg-[#8a8a8a]" />
              <div className="ml-[46px] w-[12px] h-[12px] border border-[#8a8a8a] rounded-[2px]" />
              <svg width="13" height="13" viewBox="0 0 13 13" stroke="#8a8a8a" className="ml-[47px]"><path d="M0 0l13 13M13 0L0 13" /></svg>
            </div>
          </div>
          <div className="h-[27px] bg-[#f0f0f0] border-b border-[#a8a8a8] flex items-center text-[14.5px] text-[#222] shrink-0">
            <div className="ml-[6px] w-[18px] shrink-0"><Candles size={18} /></div>
            <span className="ml-[15px] w-[49px] pt-[1px]">File</span>
            <span className="w-[58px] pt-[1px]">View</span>
            <span className="w-[62px] pt-[1px]">Insert</span>
            <span className="w-[67px] pt-[1px]">Charts</span>
            <span className="w-[61px] pt-[1px]">Tools</span>
            <span className="w-[81px] pt-[1px]">Window</span>
            <span className="pt-[1px]">Help</span>
            <div className="ml-auto mr-[8px] flex items-center">
              <div className="w-[10px] h-px bg-[#8a8a8a]" />
              <div className="ml-[15px] w-[8px] h-[9px] border border-[#8a8a8a]" />
              <svg width="10" height="10" viewBox="0 0 10 10" stroke="#8a8a8a" className="ml-[15px]"><path d="M0 0l10 10M10 0L0 10" /></svg>
            </div>
          </div>
          <Toolbar />
          <div className="flex h-[784px] shrink-0">
            <div className="w-[438px] flex flex-col shrink-0 relative">
              <MarketWatch />
              <Navigator />
            </div>
            <div className="flex-1 flex flex-col min-w-0">
              <Chart />
              <div className="h-[2px] bg-white shrink-0" />
              <ChartTabs />
            </div>
          </div>
          <Toolbox />
          <StatusBar />
        </div>
      </div>
      <div className="h-[9px] bg-[#d0d0d0] shrink-0" />
      <OrderDialog />
    </div>
  )
}
